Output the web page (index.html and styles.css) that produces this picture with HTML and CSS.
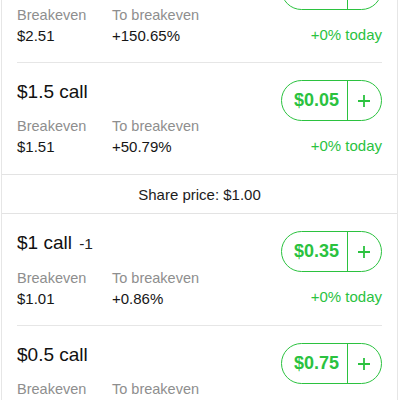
FILE: index.html
```html
<!DOCTYPE html>
<html lang="en">

<head>
    <meta charset="UTF-8">
    <meta name="viewport" content="width=device-width, initial-scale=1.0">
    <title>Options chain</title>
    <link rel="stylesheet" href="styles.css">
</head>

<body>
    <div class="chain">
        <div class="group group-top">
            <div class="option">
                <div class="option-info">
                    <div class="option-title">$2.5 call</div>
                    <div class="stats">
                        <div class="stat">
                            <div class="stat-label">Breakeven</div>
                            <div class="stat-value">$2.51</div>
                        </div>
                        <div class="stat">
                            <div class="stat-label">To breakeven</div>
                            <div class="stat-value">+150.65%</div>
                        </div>
                    </div>
                </div>
                <div class="option-side">
                    <div class="price-btn">
                        <span class="price">$0.01</span>
                        <span class="add"><svg width="14" height="14" viewBox="0 0 14 14"><path d="M7 1v12M1 7h12" stroke="#2bc23f" stroke-width="1.8" fill="none"/></svg></span>
                    </div>
                    <div class="change">+0% today</div>
                </div>
            </div>
            <div class="option">
                <div class="option-info">
                    <div class="option-title">$1.5 call</div>
                    <div class="stats">
                        <div class="stat">
                            <div class="stat-label">Breakeven</div>
                            <div class="stat-value">$1.51</div>
                        </div>
                        <div class="stat">
                            <div class="stat-label">To breakeven</div>
                            <div class="stat-value">+50.79%</div>
                        </div>
                    </div>
                </div>
                <div class="option-side">
                    <div class="price-btn">
                        <span class="price">$0.05</span>
                        <span class="add"><svg width="14" height="14" viewBox="0 0 14 14"><path d="M7 1v12M1 7h12" stroke="#2bc23f" stroke-width="1.8" fill="none"/></svg></span>
                    </div>
                    <div class="change">+0% today</div>
                </div>
            </div>
        </div>

        <div class="share-price">Share price: $1.00</div>

        <div class="group">
            <div class="option">
                <div class="option-info">
                    <div class="option-title">$1 call <span class="owned">-1</span></div>
                    <div class="stats">
                        <div class="stat">
                            <div class="stat-label">Breakeven</div>
                            <div class="stat-value">$1.01</div>
                        </div>
                        <div class="stat">
                            <div class="stat-label">To breakeven</div>
                            <div class="stat-value">+0.86%</div>
                        </div>
                    </div>
                </div>
                <div class="option-side">
                    <div class="price-btn">
                        <span class="price">$0.35</span>
                        <span class="add"><svg width="14" height="14" viewBox="0 0 14 14"><path d="M7 1v12M1 7h12" stroke="#2bc23f" stroke-width="1.8" fill="none"/></svg></span>
                    </div>
                    <div class="change">+0% today</div>
                </div>
            </div>
            <div class="option">
                <div class="option-info">
                    <div class="option-title">$0.5 call</div>
                    <div class="stats">
                        <div class="stat">
                            <div class="stat-label">Breakeven</div>
                            <div class="stat-value">$0.51</div>
                        </div>
                        <div class="stat">
                            <div class="stat-label">To breakeven</div>
                            <div class="stat-value">-49.00%</div>
                        </div>
                    </div>
                </div>
                <div class="option-side">
                    <div class="price-btn">
                        <span class="price">$0.75</span>
                        <span class="add"><svg width="14" height="14" viewBox="0 0 14 14"><path d="M7 1v12M1 7h12" stroke="#2bc23f" stroke-width="1.8" fill="none"/></svg></span>
                    </div>
                    <div class="change">+0% today</div>
                </div>
            </div>
        </div>
    </div>
</body>

</html>
```

FILE: styles.css
```css
body {
    font-family: "Liberation Sans", Arial, sans-serif;
    background-color: #fff;
    color: #1a1a1a;
    margin: 0;
    padding: 0;
    overflow: hidden;
}

.chain {
    margin: -48px 2px 0 1px;
    border-left: 1px solid #e6e6e6;
    border-right: 1px solid #e6e6e6;
}

.group {
    border-top: 1px solid #e3e3e3;
    border-bottom: 1px solid #e3e3e3;
}

.group-top {
    border-top: none;
}

.option {
    display: flex;
    justify-content: space-between;
    margin: 0 15px 0 15px;
    padding: 17px 0 16px;
    border-bottom: 1px solid #e6e6e6;
}

.option:last-child {
    border-bottom: none;
    padding-bottom: 17px;
}

.option-title {
    margin-top: 1px;
    font-size: 19px;
    line-height: 22px;
    color: #111;
}

.owned {
    margin-left: 2px;
    font-size: 15.5px;
    color: #222;
}

.stats {
    display: flex;
    margin-top: 14px;
}

.stat {
    width: 95px;
}

.stat-label {
    font-size: 14.5px;
    line-height: 18px;
    color: #8e8e8e;
}

.stat-value {
    margin-top: 2px;
    font-size: 15px;
    line-height: 20px;
    color: #161616;
}

.option-side {
    display: flex;
    flex-direction: column;
    align-items: flex-end;
}

.price-btn {
    display: flex;
    width: 101px;
    height: 41px;
    box-sizing: border-box;
    border: 1.5px solid #2bc23f;
    border-radius: 21px;
}

.price {
    width: 66px;
    display: flex;
    justify-content: center;
    align-items: center;
    padding-left: 4px;
    box-sizing: border-box;
    border-right: 1.5px solid #2bc23f;
    font-size: 18px;
    font-weight: bold;
    color: #2bc23f;
}

.add {
    flex: 1;
    display: flex;
    justify-content: center;
    align-items: center;
    padding-right: 2px;
}

.change {
    margin-top: 15px;
    font-size: 15px;
    line-height: 20px;
    color: #2bc23f;
}

.share-price {
    height: 38px;
    display: flex;
    justify-content: center;
    align-items: center;
    font-size: 15px;
    color: #1c1c1c;
}
```
